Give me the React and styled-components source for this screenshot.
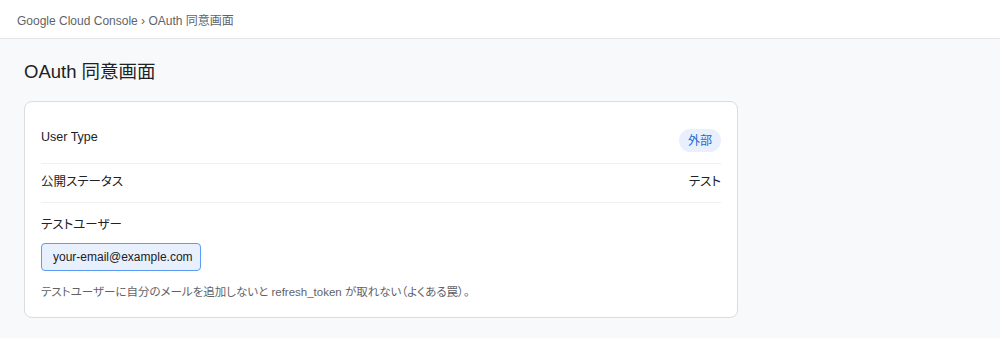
import React from 'react';
import styled, { createGlobalStyle } from 'styled-components';

const GlobalStyle = createGlobalStyle`
  html, body {
    margin: 0;
    padding: 0;
    background: #f8f9fa;
    font-family: "Liberation Sans", "Noto Sans CJK JP", sans-serif;
    font-feature-settings: "palt";
    color: #202124;
  }
  * {
    box-sizing: border-box;
  }
`;

const Header = styled.header`
  display: flex;
  align-items: center;
  height: 39px;
  padding: 0 17px;
  background: #fff;
  border-bottom: 1px solid #e3e5e8;
  font-size: 12px;
  color: #5f6368;
`;

const Main = styled.main`
  padding: 20px 24px;
`;

const Title = styled.h1`
  margin: 0 0 16px;
  font-size: 18.5px;
  line-height: 26px;
  font-weight: 400;
  color: #202124;
`;

const Card = styled.section`
  max-width: 714px;
  background: #fff;
  border: 1px solid #dadce0;
  border-radius: 8px;
  padding: 17px 16px 16px;
`;

const Row = styled.div`
  display: flex;
  justify-content: space-between;
  align-items: flex-start;
  padding: 9px 0 11px;
  border-bottom: 1px solid #eef0f2;
  font-size: 12.5px;
  line-height: 18px;
  color: #202124;
`;

const Badge = styled.span`
  display: inline-flex;
  align-items: center;
  height: 23px;
  margin-top: 1px;
  padding: 0 9px;
  border-radius: 12px;
  background: #e8f0fe;
  color: #1967d2;
  font-size: 12px;
`;

const Section = styled.div`
  padding-top: 12px;
`;

const Label = styled.div`
  font-size: 12.5px;
  line-height: 20px;
  margin-bottom: 8px;
  color: #202124;
`;

const EmailInput = styled.input`
  display: block;
  width: 160px;
  height: 28px;
  padding: 0 6px 0 11px;
  border: 1px solid #5b9cf5;
  border-radius: 4px;
  background: #e8f0fe;
  font-family: "Liberation Sans", sans-serif;
  font-size: 12px;
  color: #202124;
  outline: none;
`;

const Help = styled.p`
  margin: 12px 0 0;
  font-size: 11.5px;
  line-height: 18px;
  color: #5f6368;
`;

export default function App() {
  return (
    <>
      <GlobalStyle />
      <Header>Google Cloud Console › OAuth 同意画面</Header>
      <Main>
        <Title>OAuth 同意画面</Title>
        <Card>
          <Row>
            <span>User Type</span>
            <Badge>外部</Badge>
          </Row>
          <Row>
            <span>公開ステータス</span>
            <span>テスト</span>
          </Row>
          <Section>
            <Label>テストユーザー</Label>
            <EmailInput readOnly defaultValue="your-email@example.com" />
            <Help>
              テストユーザーに自分のメールを追加しないと refresh_token が取れない（よくある罠）。
            </Help>
          </Section>
        </Card>
      </Main>
    </>
  );
}
